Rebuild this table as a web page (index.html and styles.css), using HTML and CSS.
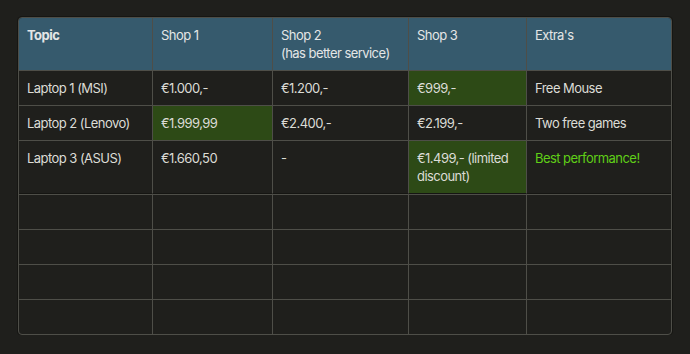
FILE: index.html
```html
<!DOCTYPE html>
<html>
<head>
<meta charset="utf-8">
<link rel="stylesheet" href="styles.css">
</head>
<body>
<div class="frame">
<table class="grid">
<colgroup>
<col class="c1"><col class="c2"><col class="c3"><col class="c4"><col class="c5">
</colgroup>
<thead>
<tr><th><strong>Topic</strong></th><th>Shop 1</th><th>Shop 2<br>(has better service)</th><th>Shop 3</th><th>Extra's</th></tr>
</thead>
<tbody>
<tr><td>Laptop 1 (MSI)</td><td>€1.000,-</td><td>€1.200,-</td><td class="best">€999,-</td><td>Free Mouse</td></tr>
<tr><td>Laptop 2 (Lenovo)</td><td class="best">€1.999,99</td><td>€2.400,-</td><td>€2.199,-</td><td>Two free games</td></tr>
<tr class="last-filled"><td>Laptop 3 (ASUS)</td><td>€1.660,50</td><td>-</td><td class="best">€1.499,- (limited discount)</td><td><span class="hl">Best performance!</span></td></tr>
<tr class="gap"><td>&nbsp;</td><td>&nbsp;</td><td>&nbsp;</td><td>&nbsp;</td><td>&nbsp;</td></tr>
<tr><td>&nbsp;</td><td>&nbsp;</td><td>&nbsp;</td><td>&nbsp;</td><td>&nbsp;</td></tr>
<tr><td>&nbsp;</td><td>&nbsp;</td><td>&nbsp;</td><td>&nbsp;</td><td>&nbsp;</td></tr>
<tr><td>&nbsp;</td><td>&nbsp;</td><td>&nbsp;</td><td>&nbsp;</td><td>&nbsp;</td></tr>
</tbody>
</table>
</div>
</body>
</html>
```
FILE: styles.css
```css
html, body {
  margin: 0;
  background: #1f1f1c;
}
body {
  padding: 17px 0 0 18px;
  font-family: Inter, "Noto Sans", sans-serif;
  font-size: 13px;
  line-height: 18px;
  letter-spacing: -0.55px;
  color: #dcdcd6;
}
.frame {
  width: 652px;
  border: 1px solid #4e4e48;
  border-radius: 4px;
  overflow: hidden;
  box-shadow: 0 0 0 1px #161613;
}
.grid {
  width: 652px;
  table-layout: fixed;
  border-collapse: separate;
  border-spacing: 0;
}
.c1 { width: 134px; }
.c2 { width: 120px; }
.c3 { width: 136px; }
.c4 { width: 118px; }
.c5 { width: 144px; }
th, td {
  box-sizing: border-box;
  padding: 8px 8px;
  text-align: left;
  vertical-align: top;
  border-right: 1px solid #4e4e48;
  border-bottom: 1px solid #4e4e48;
}
th:last-child, td:last-child { border-right: none; }
tbody tr:last-child td { border-bottom: none; }
th {
  background: #365a6d;
  font-weight: 400;
  color: #e4e6e6;
}
th strong { font-weight: 700; }
.last-filled td { border-bottom-color: #151512; }
.gap td { border-top: 1px solid #4e4e48; }
.best { background: #2d4a16; }
.hl { color: #5fcf17; }
```
